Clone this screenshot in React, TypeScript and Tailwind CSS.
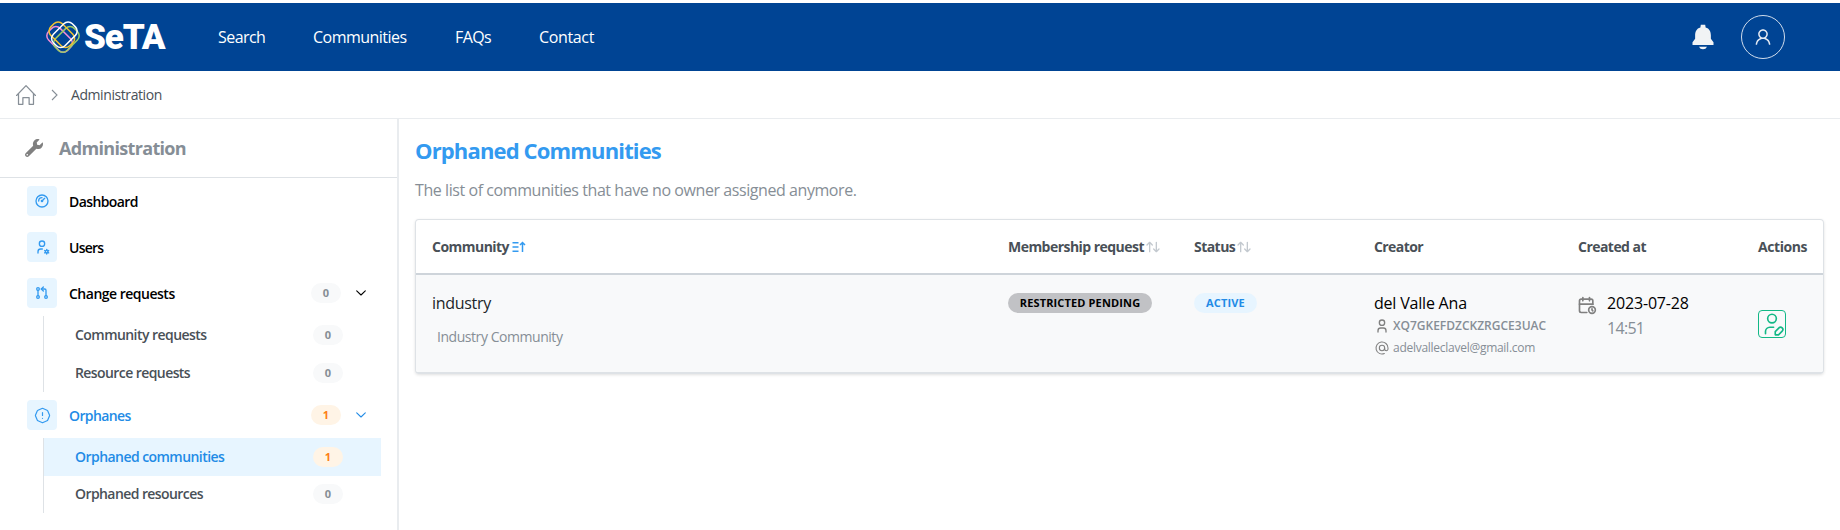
import React from 'react';
import {
  TbAlertOctagon,
  TbArrowsSort,
  TbAt,
  TbCalendarTime,
  TbGauge,
  TbGitPullRequest,
  TbUser,
  TbUserCog,
  TbUserEdit,
} from 'react-icons/tb';
import { IoNotificationsSharp } from 'react-icons/io5';
import { AiOutlineUser } from 'react-icons/ai';
import { SlHome } from 'react-icons/sl';
import { FaWrench } from 'react-icons/fa';

function Logo() {
  return (
    <a className="flex items-center gap-1">
      <svg width="34" height="32" viewBox="0 0 34 32" fill="none" strokeWidth="1.5">
        <rect x="-13.4" y="-8.2" width="26.8" height="16.4" rx="6" stroke="#f28bd6" transform="translate(13.6 18.4) rotate(45)" />
        <rect x="-13.4" y="-8.2" width="26.8" height="16.4" rx="6" stroke="#9ccc65" transform="translate(20.4 18.4) rotate(-45)" />
        <rect x="-13.4" y="-8.2" width="26.8" height="16.4" rx="6" stroke="#f2c230" transform="translate(15.8 13.8) rotate(45)" />
        <rect x="-13.4" y="-8.2" width="26.8" height="16.4" rx="6" stroke="#ffffff" transform="translate(18.4 13.8) rotate(-45)" />
      </svg>
      <span className="pt-px font-['Roboto',sans-serif] text-[35px] leading-8 font-black tracking-[-1.1px] text-white">SeTA</span>
    </a>
  );
}

function Chevron() {
  return (
    <svg width="10" height="6" viewBox="0 0 10 6" fill="none" stroke="currentColor" strokeWidth="1.1" strokeLinecap="round" strokeLinejoin="round">
      <path d="M0.7 0.8 5 5 9.3 0.8" />
    </svg>
  );
}

function Count({ value }: { value: number }) {
  return (
    <span
      className={`flex h-5 w-[30px] items-center justify-center rounded-full text-[11px] font-bold ${
        value > 0 ? 'bg-[#fff4e6] text-[#fd7e14]' : 'bg-[#f8f9fa] text-[#868e96]'
      }`}
    >
      {value}
    </span>
  );
}

type NavProps = { icon: React.ReactNode; label: React.ReactNode; count?: number; active?: boolean };

function NavItem({ icon, label, count, active }: NavProps) {
  return (
    <div className={`flex h-[46px] items-center pr-[31px] pl-[27px] ${active ? 'text-[#228be6]' : 'text-black'}`}>
      <span className="flex size-[30px] items-center justify-center rounded bg-[#e7f5ff] text-[#339af0]">{icon}</span>
      <span className="ml-3 flex-1 pt-px text-sm font-semibold">{label}</span>
      {count !== undefined && (
        <>
          <Count value={count} />
          <span className="ml-[15px]">
            <Chevron />
          </span>
        </>
      )}
    </div>
  );
}

function SubItem({ label, count, active }: { label: React.ReactNode; count: number; active?: boolean }) {
  return (
    <div
      className={`flex flex-1 items-center pr-[38px] pl-[31px] text-sm font-semibold ${
        active ? 'bg-[#e7f5ff] text-[#228be6]' : 'text-[#495057]'
      }`}
    >
      <span className="flex-1">{label}</span>
      <Count value={count} />
    </div>
  );
}

const columns = 'grid grid-cols-[576px_186px_180px_204px_180px_1fr] pl-4';

export default function App() {
  return (
    <div className="flex h-[530px] w-[1840px] flex-col overflow-hidden bg-white pt-[3px] font-['Open_Sans',sans-serif] text-black">
      <header className="flex h-[68px] shrink-0 items-center bg-[#004494] pr-[55px] pl-[46px] text-white">
        <div className="w-[172px]">
          <Logo />
        </div>
        <nav className="flex flex-1 gap-12 text-base">
          <span className="w-[47px] tracking-[-0.55px]">Search</span>
          <span className="w-[94px] tracking-[-0.53px]">Communities</span>
          <span className="w-[36px] tracking-[-0.6px]">FAQs</span>
          <span className="tracking-[-0.35px]">Contact</span>
        </nav>
        <IoNotificationsSharp size={28} className="text-[#f1f3f5]" />
        <span className="ml-6 flex size-11 items-center justify-center rounded-full border border-[#d0dcec] text-[#e3e9f2]">
          <AiOutlineUser size={20} />
        </span>
      </header>

      <div className="flex h-12 shrink-0 items-center border-b border-[#e9ecef] pl-4">
        <SlHome size={20} className="text-[#868e96]" />
        <svg className="ml-[15px]" width="7" height="12" viewBox="0 0 7 12" fill="none" stroke="#868e96" strokeWidth="1.1">
          <path d="M1 1 6 6 1 11" />
        </svg>
        <span className="ml-[13px] text-sm tracking-[-0.42px] text-[#495057]">Administration</span>
      </div>

      <div className="flex min-h-0 flex-1">
        <aside className="w-[399px] shrink-0 border-r-2 border-[#e9ecef]">
          <div className="flex h-[59px] items-center border-b border-[#dee2e6] pl-[25px]">
            <FaWrench size={18} className="text-[#808080]" />
            <h2 className="ml-4 text-lg font-bold tracking-[-0.67px] text-[#868e96]">Administration</h2>
          </div>
          <NavItem icon={<TbGauge size={16} strokeWidth={2} />} label={<span className="tracking-[-0.6px]">Dashboard</span>} />
          <NavItem icon={<TbUserCog size={16} strokeWidth={2} />} label={<span className="tracking-[-0.75px]">Users</span>} />
          <NavItem icon={<TbGitPullRequest size={16} strokeWidth={2} />} label={<span className="tracking-[-0.5px]">Change requests</span>} count={0} />
          <div className="ml-[43px] mr-4 flex h-[76px] flex-col border-l border-[#dee2e6]">
            <SubItem label={<span className="tracking-[-0.55px]">Community requests</span>} count={0} />
            <SubItem label={<span className="tracking-[-0.58px]">Resource requests</span>} count={0} />
          </div>
          <NavItem icon={<TbAlertOctagon size={17} strokeWidth={1.7} />} label={<span className="tracking-[-0.6px]">Orphanes</span>} count={1} active />
          <div className="ml-[43px] mr-4 flex h-[75px] flex-col border-l border-[#dee2e6]">
            <SubItem label={<span className="tracking-[-0.55px]">Orphaned communities</span>} count={1} active />
            <SubItem label={<span className="tracking-[-0.58px]">Orphaned resources</span>} count={0} />
          </div>
        </aside>

        <main className="flex-1 pr-4 pl-4">
          <h1 className="mt-4 text-[22px] leading-[30px] font-bold tracking-[-0.85px] text-[#339af0]">Orphaned Communities</h1>
          <p className="mt-[13px] text-base leading-6 tracking-[-0.43px] text-[#868e96]">
            The list of communities that have no owner assigned anymore.
          </p>

          <div className="mt-[17px] h-[155px] overflow-hidden rounded border border-b-2 border-[#dee2e6] shadow-[0_1px_3px_rgba(0,0,0,0.12)]">
            <div className={`${columns} h-[55px] items-center border-b-2 border-[#ced4da] text-sm font-bold text-[#495057]`}>
              <span className="flex items-center gap-[3px]">
                <span className="tracking-[-0.53px]">Community</span>
                <svg width="14" height="12" viewBox="0 0 14 12" fill="none" stroke="#339af0" strokeWidth="1.5">
                  <path d="M0.5 1.8h6M0.5 6h6M0.5 10.2h6M10.5 11V1.8M8 4l2.5-2.5L13 4" />
                </svg>
              </span>
              <span className="flex items-center gap-px">
                <span className="tracking-[-0.54px]">Membership request</span>
                <TbArrowsSort size={16} strokeWidth={2} className="text-[#c3c9cf]" />
              </span>
              <span className="flex items-center gap-px">
                <span className="tracking-[-0.54px]">Status</span>
                <TbArrowsSort size={16} strokeWidth={2} className="text-[#c3c9cf]" />
              </span>
              <span className="tracking-[-0.59px]">Creator</span>
              <span className="tracking-[-0.54px]">Created at</span>
              <span className="tracking-[-0.43px]">Actions</span>
            </div>

            <div className={`${columns} h-[97px] items-start bg-[#f8f9fa]`}>
              <div className="pt-4">
                <div className="text-base leading-6 font-medium tracking-[-0.3px] text-[#212529]">industry</div>
                <div className="mt-3 pl-[5px] text-sm leading-5 tracking-[-0.45px] text-[#868e96]">Industry Community</div>
              </div>
              <div className="pt-[18px]">
                <span className="flex h-5 w-36 items-center justify-center rounded-full bg-[#c1c2c5] text-[11px] font-bold tracking-[0.14px]">
                  RESTRICTED PENDING
                </span>
              </div>
              <div className="pt-[18px]">
                <span className="flex h-5 w-[63px] items-center justify-center rounded-full bg-[#e7f5ff] text-[11px] font-bold tracking-[0.15px] text-[#228be6]">
                  ACTIVE
                </span>
              </div>
              <div className="pt-4">
                <div className="text-base leading-6 font-medium tracking-[-0.2px]">del Valle Ana</div>
                <div className="flex h-[22px] items-center gap-[3px] text-[#868e96]">
                  <TbUser size={16} strokeWidth={2} className="text-[#808080]" />
                  <span className="text-xs font-semibold">XQ7GKEFDZCKZRGCE3UAC</span>
                </div>
                <div className="flex h-[22px] items-center gap-[3px] text-[#868e96]">
                  <TbAt size={16} strokeWidth={1.6} className="text-[#808080]" />
                  <span className="text-xs tracking-[-0.27px]">adelvalleclavel@gmail.com</span>
                </div>
              </div>
              <div className="flex pt-4">
                <TbCalendarTime size={20} strokeWidth={2} className="mt-1 -ml-px text-[#808080]" />
                <div className="ml-[10px]">
                  <div className="text-base leading-6 tracking-[-0.17px]">2023-07-28</div>
                  <div className="text-base leading-[26px] tracking-[-0.7px] text-[#868e96]">14:51</div>
                </div>
              </div>
              <div className="pt-[35px]">
                <span className="flex size-7 items-center justify-center rounded border border-[#12b886] text-[#12b886]">
                  <TbUserEdit size={26} strokeWidth={1.5} />
                </span>
              </div>
            </div>
          </div>
        </main>
      </div>
    </div>
  );
}
